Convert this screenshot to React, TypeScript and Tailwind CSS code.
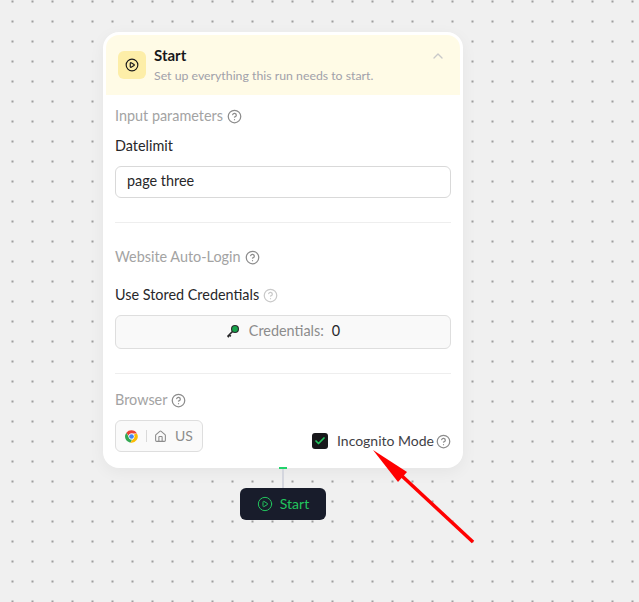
import { Check, ChevronUp, CircleHelp, CirclePlay, House } from "lucide-react";

function ChromeIcon() {
  return (
    <svg width="15" height="15" viewBox="0 0 48 48">
      <path fill="#ea4335" d="M24 4a20 20 0 0 1 17.3 10H24a10 10 0 0 0-9.6 7.2L7.6 11.6A20 20 0 0 1 24 4z" />
      <path fill="#34a853" d="M7.6 11.6l9.1 16.2A10 10 0 0 0 26 33.8l-5.6 9.9A20 20 0 0 1 7.6 11.6z" />
      <path fill="#fbbc05" d="M41.3 14A20 20 0 0 1 20.400 43.700L30.300 29.500A8 8 0 0 0 30.500 18z" />
      <circle cx="24" cy="24" r="9.500" fill="#fff" />
      <circle cx="24" cy="24" r="7.500" fill="#4285f4" />
    </svg>
  );
}

function KeyIcon() {
  return (
    <svg width="14" height="14" viewBox="0 0 14 14">
      <path d="M7 7L1.500 12.500M3.200 10.800l1.600 1.600M1.800 12.200l1.200 1" stroke="#27272a" strokeWidth="1.600" fill="none" />
      <circle cx="9" cy="5" r="4" fill="#27272a" />
      <circle cx="9" cy="5" r="2.900" fill="#16a34a" />
    </svg>
  );
}

export default function App() {
  return (
    <div className="relative h-[602px] w-[639px] overflow-hidden bg-[#f0f0f0] bg-[radial-gradient(circle,#707070_0.6px,transparent_0.9px)] bg-[length:20px_20px] bg-[position:2.5px_-8.5px] pt-8 pl-[103px] font-['Lato','Noto_Sans',sans-serif]">
      <section className="w-[360px] h-[436px] rounded-2xl bg-white p-[3px] shadow-[0_4px_16px_rgba(0,0,0,0.05)]">
        <header className="flex h-[60px] items-start bg-[#fffbe6] rounded-t-[13px] pl-3 pr-4 pt-4">
          <div className="flex size-7 items-center justify-center rounded-md bg-[#fdeea8]">
            <CirclePlay size={14} strokeWidth={2} className="text-[#18181b]" />
          </div>
          <div className="ml-2 flex-1 -mt-[5px]">
            <h3 className="text-[15px] font-bold leading-[18px] text-[#18181b]">Start</h3>
            <p className="text-[12.3px] leading-4 mt-[4px] text-[#a1a1aa]">Set up everything this run needs to start.</p>
          </div>
          <ChevronUp size={16} className="-mt-[3px] mr-[-2px] text-[#c9c9c9]" />
        </header>

        <div className="px-[9px] pt-3">
          <div className="flex h-[18px] items-center gap-[4px] text-[14.4px] text-[#a3a3a3]">
            Input parameters
            <CircleHelp size={15} className="text-[#8c8c8c]" />
          </div>
          <label className="mt-3 block text-[14.4px] leading-[18px] text-[#27272a]">Datelimit</label>
          <div className="mt-[11px] flex h-8 items-center rounded-md border border-[#d9d9d9] px-[11px] pb-[2px] text-[14.4px] text-[#27272a]">
            page three
          </div>
          <div className="mt-6 border-t border-[#eeeeee]" />

          <div className="mt-[25px] flex h-[18px] items-center gap-[4px] text-[14.4px] text-[#a3a3a3]">
            Website Auto-Login
            <CircleHelp size={15} className="text-[#8c8c8c]" />
          </div>
          <div className="mt-5 flex h-[18px] items-center gap-[4px] text-[14.4px] text-[#27272a]">
            Use Stored Credentials
            <CircleHelp size={15} className="text-[#c9c9c9]" />
          </div>
          <div className="mt-[11px] flex h-[34px] items-center justify-center rounded-md border border-[#dedede] bg-[#f9f9f9] pb-[2px] text-[14.4px]">
            <KeyIcon />
            <span className="ml-[9px] text-[#8c8c8c]">Credentials:</span>
            <span className="ml-2 text-[#27272a]">0</span>
          </div>
          <div className="mt-6 border-t border-[#eeeeee]" />

          <div className="mt-[17px] flex h-[18px] items-center gap-[4px] text-[14.4px] text-[#a3a3a3]">
            Browser
            <CircleHelp size={15} className="text-[#8c8c8c]" />
          </div>
          <div className="mt-[11px] flex items-start justify-between">
            <div className="flex h-8 w-[88px] items-center rounded-md border border-[#dedede] bg-[#fafafa] pl-[8px] text-sm text-[#8c8c8c]">
              <ChromeIcon />
              <span className="mx-[7px] h-3 border-l border-[#d9d9d9]" />
              <House size={13} />
              <span className="ml-2">US</span>
            </div>
            <div className="mt-[13px] flex h-4 items-center text-sm text-[#3f3f46]">
              <span className="flex size-4 items-center justify-center rounded-[3px] bg-[#18181b]">
                <Check size={12} strokeWidth={3.5} className="text-[#22c55e]" />
              </span>
              <span className="ml-[9px] -mt-[1px]">Incognito Mode</span>
              <CircleHelp size={15} className="ml-[2px] text-[#8c8c8c]" />
            </div>
          </div>
        </div>
      </section>

      <div className="flex w-[360px] flex-col items-center">
        <div className="-mt-[1px] h-[2px] w-2 bg-[#22d36b]" />
        <div className="h-[19px] w-[2px] bg-[#d4d6de]" />
        <button className="flex h-8 w-[86px] items-center justify-center gap-[7px] rounded-md bg-[#181c2b] pb-[1px] text-sm text-[#22c55e]">
          <CirclePlay size={16} strokeWidth={1.5} />
          Start
        </button>
      </div>

      <svg className="absolute left-0 top-0" width="639" height="602" viewBox="0 0 639 602">
        <path d="M473 542L402 476" stroke="#ff0000" strokeWidth="3.500" fill="none" />
        <path d="M373 450L407 472L398 482Z" fill="#ff0000" />
      </svg>
    </div>
  );
}
